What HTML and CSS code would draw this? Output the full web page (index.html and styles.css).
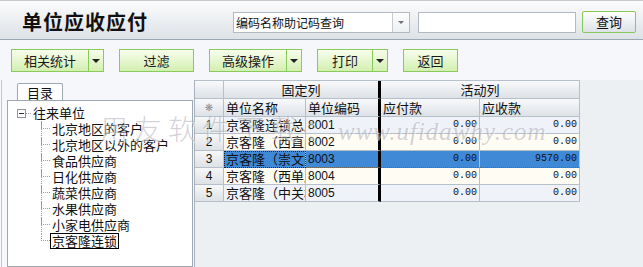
FILE: index.html
```html
<!DOCTYPE html>
<html lang="zh-CN">
<head>
    <meta charset="UTF-8">
    <title>单位应收应付</title>
    <link rel="stylesheet" href="styles.css">
</head>
<body>

<div class="header">
    <h1 class="title">单位应收应付</h1>
    <div class="combo">
        <span class="combo-text">编码名称助记码查询</span>
        <span class="combo-arrow"></span>
    </div>
    <input type="text" class="search-input">
    <button class="btn-query">查询</button>
</div>

<div class="toolbar">
    <div class="btn-group w78">
        <button class="btn">相关统计</button>
        <button class="btn-arrow"></button>
    </div>
    <div class="btn-group">
        <button class="btn w75">过滤</button>
    </div>
    <div class="btn-group">
        <button class="btn w78">高级操作</button>
        <button class="btn-arrow"></button>
    </div>
    <div class="btn-group">
        <button class="btn w56">打印</button>
        <button class="btn-arrow"></button>
    </div>
    <div class="btn-group">
        <button class="btn w55">返回</button>
    </div>
</div>

<div class="main">
    <div class="side">
        <div class="tabs"><span class="tab">目录</span></div>
        <div class="panel">
            <div class="tree-root">
                <span class="toggle"></span>
                <span class="link"></span>
                <span class="label">往来单位</span>
            </div>
            <ul class="tree-children">
                <li><span class="label">北京地区的客户</span></li>
                <li><span class="label">北京地区以外的客户</span></li>
                <li><span class="label">食品供应商</span></li>
                <li><span class="label">日化供应商</span></li>
                <li><span class="label">蔬菜供应商</span></li>
                <li><span class="label">水果供应商</span></li>
                <li><span class="label">小家电供应商</span></li>
                <li><span class="label current">京客隆连锁</span></li>
            </ul>
        </div>
    </div>

    <div class="grid-area">
        <div class="grid">
            <div class="gh"></div>
            <div class="gh span2 fix-end">固定列</div>
            <div class="gh span2">活动列</div>

            <div class="gh star">❋</div>
            <div class="gh left">单位名称</div>
            <div class="gh left fix-end">单位编码</div>
            <div class="gh left">应付款</div>
            <div class="gh left">应收款</div>

            <div class="row odd">
                <div class="rh">1</div>
                <div class="name">京客隆连锁总店</div>
                <div class="code fix-end">8001</div>
                <div class="num">0.00</div>
                <div class="num">0.00</div>
            </div>
            <div class="row even">
                <div class="rh">2</div>
                <div class="name">京客隆（西直门店）</div>
                <div class="code fix-end">8002</div>
                <div class="num">0.00</div>
                <div class="num">0.00</div>
            </div>
            <div class="row selected">
                <div class="rh">3</div>
                <div class="name focus">京客隆（崇文门店）</div>
                <div class="code fix-end">8003</div>
                <div class="num">0.00</div>
                <div class="num">9570.00</div>
            </div>
            <div class="row even">
                <div class="rh">4</div>
                <div class="name">京客隆（西单店）</div>
                <div class="code fix-end">8004</div>
                <div class="num">0.00</div>
                <div class="num">0.00</div>
            </div>
            <div class="row odd">
                <div class="rh">5</div>
                <div class="name">京客隆（中关村店）</div>
                <div class="code fix-end">8005</div>
                <div class="num">0.00</div>
                <div class="num">0.00</div>
            </div>
        </div>
    </div>
</div>

<div class="watermark"><span class="wm-cn">用友软件下载：</span><span class="wm-en">www.ufidawhy.com</span></div>

</body>
</html>
```

FILE: styles.css
```css
body {
    margin: 0;
    width: 643px;
    height: 267px;
    overflow: hidden;
    position: relative;
    font-family: "Noto Sans CJK SC", sans-serif;
    font-size: 13px;
    color: #111;
    background-color: #f5f7fa;
}

/* header */
.header {
    display: flex;
    align-items: flex-start;
    height: 28px;
    padding-top: 10px;
    border-top: 1px solid #c6cbd0;
    border-bottom: 1px solid #9ba7b3;
    background: linear-gradient(#fbfcfd, #dde2e6);
}

.title {
    width: 233px;
    margin: 1px 0 0 0;
    padding-left: 22px;
    box-sizing: border-box;
    font-size: 20px;
    line-height: 20px;
    font-weight: bold;
    letter-spacing: 1px;
}

.combo {
    display: flex;
    width: 177px;
    height: 21px;
    margin-top: 1px;
    box-sizing: border-box;
    border: 1px solid #b3bac2;
    background-color: #fff;
}

.combo-text {
    flex: 1;
    padding-left: 2px;
    font-size: 12px;
    line-height: 19px;
}

.combo-arrow {
    width: 16px;
    border-left: 1px solid #c6ccd2;
    background: linear-gradient(#fdfdfd, #eef0f2);
    display: flex;
    align-items: center;
    justify-content: center;
}

.combo-arrow::after {
    content: "";
    border-left: 3px solid transparent;
    border-right: 3px solid transparent;
    border-top: 3px solid #6d737a;
}

.search-input {
    width: 158px;
    height: 21px;
    margin: 1px 0 0 8px;
    padding: 0;
    box-sizing: border-box;
    border: 1px solid #b3bac2;
    background-color: #fff;
}

.btn-query {
    width: 54px;
    height: 22px;
    margin-left: 6px;
    padding: 0;
    border: 1px solid #86c95a;
    border-radius: 2px;
    background: linear-gradient(#fefefe, #dde2e6);
    font-family: "Noto Sans CJK SC", sans-serif;
    font-size: 13px;
    line-height: 20px;
    color: #111;
}

/* toolbar */
.toolbar {
    display: flex;
    gap: 15px;
    height: 40px;
    padding: 9px 0 0 11px;
    box-sizing: border-box;
}

.btn-group {
    display: flex;
    height: 23px;
}

.btn,
.btn-arrow {
    height: 23px;
    margin: 0;
    padding: 0;
    border: 1px solid #88cb5a;
    background: linear-gradient(#f8fdee, #d3efb0);
    font-family: "Noto Sans CJK SC", sans-serif;
    font-size: 13px;
    line-height: 21px;
    color: #1a1a1a;
}

.btn-group.w78 .btn,
.btn.w78 { width: 78px; }
.btn.w75 { width: 75px; }
.btn.w56 { width: 56px; }
.btn.w55 { width: 55px; }

.btn-arrow {
    width: 15px;
    border-left: none;
    display: flex;
    align-items: center;
    justify-content: center;
}

.btn-arrow::after {
    content: "";
    border-left: 4px solid transparent;
    border-right: 4px solid transparent;
    border-top: 4px solid #222;
}

/* main */
.main {
    display: flex;
    height: 187px;
}

.side {
    width: 193px;
    margin-left: 1px;
    border-left: 1px solid #c3c9cf;
    padding: 3px 1px 0 5px;
    box-sizing: border-box;
    display: flex;
    flex-direction: column;
}

.tabs {
    display: flex;
    padding-left: 10px;
}

.tab {
    width: 46px;
    height: 18px;
    margin-bottom: -1px;
    box-sizing: border-box;
    border: 1px solid #9ea8b2;
    border-bottom: none;
    border-radius: 2px 2px 0 0;
    background-color: #fff;
    text-align: center;
    line-height: 17px;
}

.panel {
    flex: 1;
    border: 1px solid #9ea8b2;
    background-color: #fff;
    padding: 4px 0 0 9px;
}

.tree-root {
    display: flex;
    align-items: center;
    height: 16px;
}

.toggle {
    width: 9px;
    height: 9px;
    box-sizing: border-box;
    border: 1px solid #8d97a1;
    display: flex;
    align-items: center;
    justify-content: center;
}

.toggle::after {
    content: "";
    width: 5px;
    height: 1px;
    background-color: #333;
}

.link {
    width: 5px;
    border-top: 1px dotted #9a9a9a;
}

.label {
    padding: 0 1px;
    border: 1px solid transparent;
    line-height: 14px;
    white-space: nowrap;
}

.label.current {
    border-color: #000;
}

.tree-children {
    list-style: none;
    margin: 0 0 0 24px;
    padding: 0;
}

.tree-children li {
    display: flex;
    align-items: center;
    height: 16px;
}

.tree-children li:not(:last-child) {
    background: repeating-linear-gradient(to bottom, #9a9a9a 0 1px, transparent 1px 2px) 0 0 / 1px 100% no-repeat;
}

.tree-children li::before {
    content: "";
    align-self: flex-start;
    flex: 0 0 9px;
    height: 8px;
    box-sizing: border-box;
    border-left: 1px dotted #9a9a9a;
    border-bottom: 1px dotted #9a9a9a;
}

/* grid */
.grid-area {
    flex: 1;
    border-left: 1px solid #a9b2bc;
    background-color: #edf0f3;
}

.grid {
    display: grid;
    grid-template-columns: 29px 82px 75px 99px 100px;
    grid-template-rows: 18px 18px repeat(5, 17px);
    width: max-content;
    border-top: 1px solid #b7c0ca;
}

.grid > div,
.row > div {
    box-sizing: border-box;
    border-right: 1px solid #b7c0ca;
    border-bottom: 1px solid #b7c0ca;
    overflow: hidden;
    white-space: nowrap;
}

.row {
    display: contents;
}

.gh {
    background: linear-gradient(#f8f9fb, #dde2e7);
    text-align: center;
    line-height: 17px;
}

.gh.left {
    text-align: left;
    padding-left: 2px;
}

.gh.span2 {
    grid-column: span 2;
}

.gh.star {
    font-family: "DejaVu Sans", sans-serif;
    font-size: 10px;
    color: #8a9098;
}

.grid .fix-end,
.row .fix-end {
    border-right: 3px solid #000;
}

.rh {
    background: linear-gradient(#f6f7f8, #dee1e5);
    text-align: center;
    font-family: "Liberation Sans", sans-serif;
    font-size: 12px;
    line-height: 16px;
}

.name {
    padding-left: 2px;
    line-height: 16px;
}

.code {
    padding-left: 2px;
    font-family: "Liberation Sans", sans-serif;
    font-size: 12px;
    line-height: 16px;
}

.num {
    padding-right: 2px;
    text-align: right;
    font-family: "Liberation Mono", monospace;
    font-size: 10px;
    line-height: 16px;
}

.row.odd > div:not(.rh) { background-color: #eff3f9; }
.row.even > div:not(.rh) { background-color: #fefcf3; }

.row.selected > div:not(.rh) {
    background-color: #3f89d7;
    border-bottom: 1px dotted #6e665a;
}

.row.selected > .focus {
    outline: 1px dotted #222;
    outline-offset: -1px;
}

/* watermark over the page */
.watermark {
    position: absolute;
    left: 100px;
    top: 114px;
    white-space: nowrap;
    pointer-events: none;
    color: rgba(150, 150, 160, 0.42);
    text-shadow: 1px 1px 0 rgba(255, 255, 255, 0.5);
}

.wm-cn {
    font-family: "Noto Sans CJK SC", sans-serif;
    font-weight: 300;
    font-size: 28px;
    line-height: 28px;
    letter-spacing: 6px;
}

.wm-en {
    font-family: "Liberation Serif", serif;
    font-style: italic;
    font-size: 25px;
    letter-spacing: 1px;
}
```
